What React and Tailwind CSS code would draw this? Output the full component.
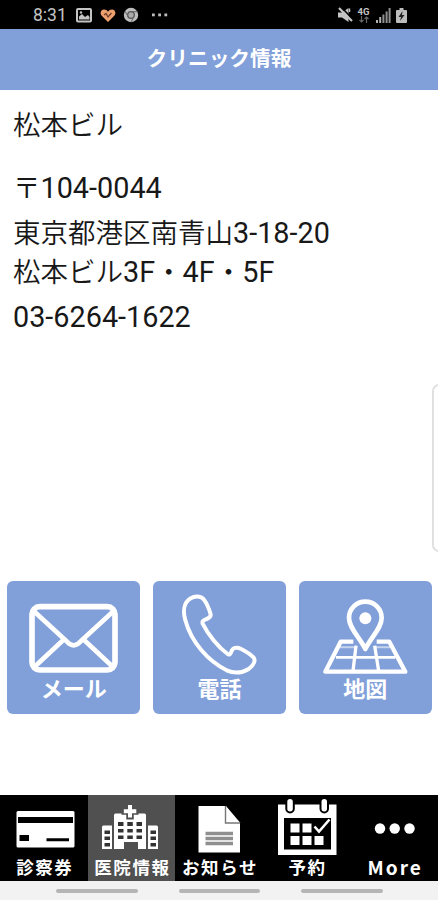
import React from 'react';
import clsx from 'clsx';

/* Status bar */
const StatusBar = () => (
    <div className="h-[29px] shrink-0 bg-black flex items-center justify-between pl-[33px] pr-[31px] pt-px text-[#c4c4c4]">
        <div className="flex items-center">
            <span className="w-[34px] pt-px font-[Roboto] text-[17.500px] leading-none">8:31</span>
            <svg className="ml-[9px]" width="16" height="15" viewBox="0 0 16 15">
                <rect x="1" y="1" width="14" height="12.5" rx="1" fill="none" stroke="#c4c4c4" strokeWidth="2" />
                <path d="M3 11.5V8.5l3-2.5 3 3 3-2 1.500 2v2.500z" fill="#c4c4c4" />
                <circle cx="5" cy="4.500" r="1.200" fill="#c4c4c4" />
            </svg>
            <svg className="ml-[8px]" width="16" height="15" viewBox="0 0 16 15">
                <path d="M8 14 1.500 7.500C-.5 5 1 1.500 4 1.500c1.800 0 3 .8 4 2.200 1-1.400 2.200-2.200 4-2.200 3 0 4.500 3.500 2.500 6z" fill="#eda06f" />
                <path d="M4 7l2-1.500 2 3.500 3.500-4" fill="none" stroke="#6b3d28" strokeWidth="1.300" />
            </svg>
            <svg className="ml-[7px]" width="16" height="16" viewBox="0 0 16 16">
                <circle cx="8" cy="8" r="7.200" fill="#bdbdbd" />
                <circle cx="8" cy="8" r="3.300" fill="#aaa" stroke="#555" strokeWidth="1.300" />
                <path d="M8 4.700h6.500M5.100 9.700 2 4.200M10.900 9.700 8 15" stroke="#666" strokeWidth="1" />
            </svg>
            <svg className="ml-[12px]" width="18" height="4" viewBox="0 0 18 4" fill="#bbb">
                <rect x="1" y=".5" width="2.800" height="2.800" />
                <rect x="7.200" y=".5" width="2.800" height="2.800" />
                <rect x="13.400" y=".5" width="2.800" height="2.800" />
            </svg>
        </div>
        <div className="flex items-center">
            <svg width="15" height="16" viewBox="0 0 15 16">
                <path d="M0 5.500h4L10.500 1v14L4 10.500H0z" fill="#c4c4c4" />
                <path d="M3.500.5l12 12.500" stroke="#000" strokeWidth="1.600" />
                <path d="M1 1l13 13" stroke="#c4c4c4" strokeWidth="2.200" />
                <path d="M11.500 5V1.500" stroke="#c4c4c4" strokeWidth="1.500" />
            </svg>
            <div className="ml-[4px] w-[13px] flex flex-col items-center">
                <span className="font-[Roboto] font-bold text-[9.500px] leading-[8px]">4G</span>
                <svg width="10" height="7" viewBox="0 0 10 7" fill="none" stroke="#666" strokeWidth="1.200">
                    <path d="M2.500 0v6M.5 4l2 2 2-2M7.500 7V1M5.500 3l2-2 2 2" />
                </svg>
            </div>
            <svg className="ml-[6px]" width="15" height="15" viewBox="0 0 15 15">
                <path d="M0 12h2v3H0zM3.200 9h2v6h-2z" fill="#b0b0b0" />
                <path d="M6.400 6.500h2V15h-2zM9.600 3.500h2V15h-2zM12.600 0h2v15h-2z" fill="#8f8f8f" />
            </svg>
            <svg className="ml-[5px]" width="11" height="15" viewBox="0 0 11 15">
                <path d="M3.500 0h4v2H10a1 1 0 0 1 1 1v11a1 1 0 0 1-1 1H1a1 1 0 0 1-1-1V3a1 1 0 0 1 1-1h2.500z" fill="#bdbdbd" />
                <path d="M6.500 3 2.500 9h2.500L4 13l4.500-6H6z" fill="#222" />
            </svg>
        </div>
    </div>
);

/* Japanese text inside the address, a little smaller than the digits */
const Ja = ({ children }) => (
    <span className="font-['Noto_Sans_CJK_JP',sans-serif] font-[350] text-[27.500px]">{children}</span>
);

const MailIcon = () => (
    <svg className="shrink-0" width="133" height="94" viewBox="22 32 399 282" fill="none" stroke="#fff" strokeWidth="17" strokeLinejoin="round">
        <rect x="97" y="109" width="249" height="190" rx="23" />
        <path d="M102 122l98 90q22 26 44 0l98-90M104 290l86-80M340 290l-86-80" strokeWidth="14" />
    </svg>
);

const PhoneIcon = () => (
    <svg className="shrink-0" width="133" height="94" viewBox="25 32 399 282" fill="none" stroke="#fff" strokeWidth="12" strokeLinejoin="round" strokeLinecap="round">
        <path d="M138 84C150 76 170 76 178 88C188 102 194 118 198 132C200 144 184 146 176 151C172 154 173 157 174 160C190 192 220 230 249 251C254 255 258 250 260 244C264 232 276 229 288 235C302 242 318 252 327 262C334 272 324 286 312 296C292 308 268 310 246 300C190 272 140 216 122 150C114 122 118 96 138 84Z" />
    </svg>
);

const MapIcon = () => (
    <svg className="shrink-0" width="133" height="94" viewBox="27 32 399 282" fill="none" stroke="#fff" strokeLinejoin="round">
        <path d="M190 214h-38L106 304h240L298 214h-38" strokeWidth="13" />
        <path d="M138 261h178" strokeWidth="8" />
        <path d="M150 231h44M256 231h46" strokeWidth="6" opacity=".55" />
        <path d="M198 226l-9 76M254 226l12 76" strokeWidth="10" />
        <path d="M226 236C210 202 177 174 177 143a49 49 0 0 1 98 0C275 174 242 202 226 236Z" fill="#819fd9" strokeWidth="14" />
        <circle cx="226" cy="144" r="18" fill="#fff" stroke="none" />
    </svg>
);

const CardIcon = () => (
    <svg className="shrink-0" width="88" height="59" viewBox="0 0 88 59">
        <rect x="16.500" y="16" width="58" height="36.500" rx="1.500" fill="#fff" />
        <path d="M18 22h55v6H18zM19.500 40h9.500v6h-9.500zM46.500 43.300h22.500v3H46.500z" fill="#000" />
    </svg>
);

const HospitalIcon = () => (
    <svg className="shrink-0" width="88" height="59" viewBox="0 0 88 59">
        <path d="M15 32q0-1.500 1.500-1.500H25V54H15zM61 30.500h8.500q1.500 0 1.500 1.500v22H61zM27 20q0-1.500 1.500-1.500h29Q59 18.500 59 20v34h-8v-7H37v7H27z" fill="#fff" />
        <path d="M43 8.500v16M34.500 16h17" stroke="#505050" strokeWidth="7.500" />
        <path d="M43 10v12.500M36.800 16.200h12.500" stroke="#fff" strokeWidth="4" />
        <path
            d="M31 27h5.500v4H31zM40.300 27h5.500v4h-5.500zM49.500 27H55v4h-5.500zM31 34h5.500v3.500H31zM40.300 34h5.500v3.500h-5.500zM49.500 34H55v3.500h-5.500zM31 40.500h5.500V44H31zM40.300 40.500h5.500V44h-5.500zM49.500 40.500H55V44h-5.500zM17.500 35.500H23V39h-5.500zM17.500 41.500H23V45h-5.500zM17.500 48H23v3.500h-5.500zM63.500 35.500H69V39h-5.500zM63.500 41.500H69V45h-5.500zM63.500 48H69v3.500h-5.500z"
            fill="#333"
        />
    </svg>
);

const NewsIcon = () => (
    <svg className="shrink-0" width="88" height="59" viewBox="0 0 88 59">
        <path d="M23.500 11H51l14 16.500V57.500H23.500z" fill="#fff" />
        <path d="M50.500 11v17H65" fill="none" stroke="#777" strokeWidth="1.400" />
        <path d="M30.500 38.500h27.500M30.500 43.500h27.500M30.500 48.500h27.500" stroke="#8f8f8f" strokeWidth="3.600" />
    </svg>
);

const CalendarIcon = () => (
    <svg className="shrink-0 overflow-visible" width="88" height="59" viewBox="0 0 88 59">
        <path d="M15 9.500h58.500V60H15z" fill="#fff" />
        <path d="M21 23h47v31.500H21z" fill="#000" />
        <path d="M27.500 28.500h9v9h-9zM39.500 28.500h9v9h-9zM27.500 41h9v9h-9zM39.500 41h9v9h-9zM51.500 41h9v9h-9z" fill="#fff" />
        <path d="M51.500 31.500l4.500 5 10.500-12" fill="none" stroke="#fff" strokeWidth="2.600" />
        <rect x="23.300" y="3" width="7.500" height="14.500" rx="3.700" fill="#fff" stroke="#000" strokeWidth="2" />
        <rect x="57.500" y="3" width="7.500" height="14.500" rx="3.700" fill="#fff" stroke="#000" strokeWidth="2" />
    </svg>
);

const MoreIcon = () => (
    <svg className="shrink-0" width="88" height="59" viewBox="0 0 88 59" fill="#fff">
        <circle cx="30" cy="33.500" r="5.200" />
        <circle cx="44.700" cy="33.500" r="5.200" />
        <circle cx="59.500" cy="33.500" r="5.200" />
    </svg>
);

const actions = [
    { label: 'メール', icon: MailIcon },
    { label: '電話', icon: PhoneIcon },
    { label: '地図', icon: MapIcon },
];

const tabs = [
    { label: '診察券', icon: CardIcon },
    { label: '医院情報', icon: HospitalIcon, active: true },
    { label: 'お知らせ', icon: NewsIcon },
    { label: '予約', icon: CalendarIcon },
    { label: 'More', icon: MoreIcon, wide: true },
];

const App = () => (
    <div className="relative w-[438px] h-[900px] flex flex-col overflow-hidden bg-white font-['Noto_Sans_CJK_JP',sans-serif]">
        <StatusBar />

        {/* Title */}
        <header className="h-[61px] shrink-0 bg-[#819fd9] flex items-center justify-center pb-[5px]">
            <h1 className="text-white font-bold text-[20.700px] leading-none">クリニック情報</h1>
        </header>

        {/* Clinic address */}
        <main className="flex-1 pl-[13px] pt-[13px] font-[Roboto,'Noto_Sans_CJK_JP',sans-serif] text-[28.800px] text-[#181818] whitespace-nowrap">
            <p className="h-[40px] leading-[40px]"><Ja>松本ビル</Ja></p>
            <p className="mt-[23px] h-[40px] leading-[40px]"><Ja>〒</Ja>104-0044</p>
            <p className="mt-[6px] h-[39px] leading-[39px]"><Ja>東京都港区南青山</Ja>3-18-20</p>
            <p className="h-[39px] leading-[39px]"><Ja>松本ビル</Ja>3F<Ja>・</Ja>4F<Ja>・</Ja>5F</p>
            <p className="mt-[7px] h-[40px] leading-[40px]">03-6264-1622</p>
        </main>

        {/* Edge panel handle */}
        <div className="absolute top-[384px] -right-[8px] w-[14px] h-[168px] rounded-[8px] border-2 border-[#e0e0e0]" />

        {/* Actions */}
        <div className="shrink-0 h-[214px] pl-[7px] flex gap-[12.500px]">
            {actions.map(({ label, icon: Icon }) => (
                <button key={label} className="w-[133.300px] h-[133px] shrink-0 rounded-[6px] bg-[#819fd9] flex flex-col items-center overflow-hidden">
                    <Icon />
                    <span className="text-white font-bold text-[22px] leading-[24px]">{label}</span>
                </button>
            ))}
        </div>

        {/* Bottom tabs */}
        <nav className="shrink-0 h-[86px] bg-black flex">
            {tabs.map(({ label, icon: Icon, active, wide }) => (
                <button
                    key={label}
                    className={clsx('flex-1 min-w-0 flex flex-col items-center overflow-hidden', active && 'bg-[#505050]')}
                >
                    <Icon />
                    <span
                        className={clsx(
                            'pl-[2px] text-white font-bold leading-[26px] whitespace-nowrap',
                            wide ? 'text-[19px] tracking-[2px]' : 'text-[17.500px] tracking-[1.600px]'
                        )}
                    >
                        {label}
                    </span>
                </button>
            ))}
        </nav>

        {/* System navigation */}
        <div className="shrink-0 h-[19px] bg-[#f2f2f2] pt-[8px] pl-[56px] flex gap-[41px]">
            <div className="w-[81.500px] h-[4px] rounded-full bg-[#b5b5b5]" />
            <div className="w-[81.500px] h-[4px] rounded-full bg-[#b5b5b5]" />
            <div className="w-[81.500px] h-[4px] rounded-full bg-[#b5b5b5]" />
        </div>
    </div>
);

export default App;
